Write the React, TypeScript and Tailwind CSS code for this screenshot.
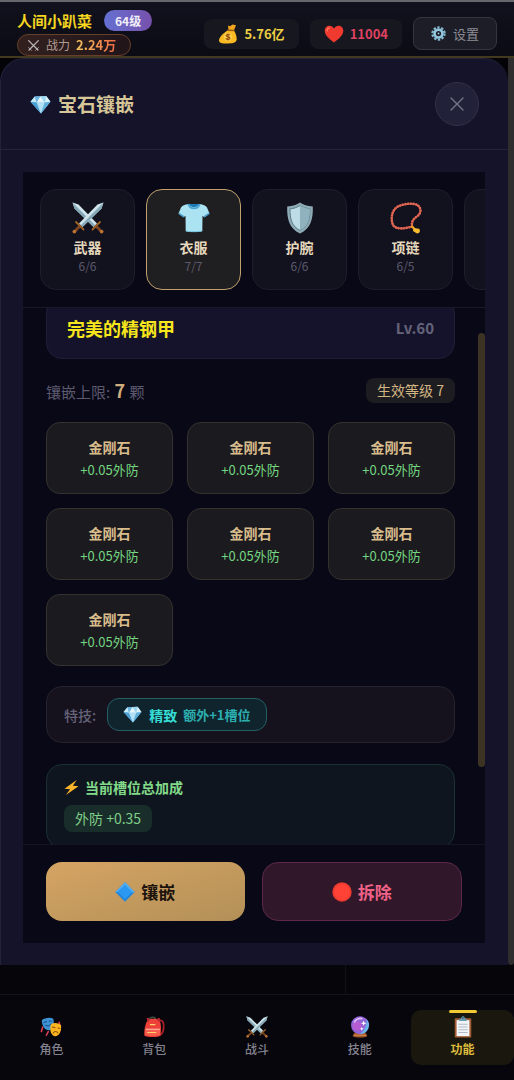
import { useLayoutEffect, useRef, useState } from "react";
import type { ReactNode } from "react";

type IconProps = { className?: string };

const GEMS = Array.from({ length: 7 }, (_, i) => ({ id: i, name: "金刚石", bonus: "+0.05外防" }));

function Swords({ className }: IconProps) {
  return (
    <svg viewBox="0 0 32 32" className={className} aria-hidden="true">
      {[false, true].map((flip) => (
        <g key={String(flip)} transform={flip ? "translate(32 0) scale(-1 1)" : undefined}>
          <path d="M.5.5l6 2L25 21.500 21.500 25 2.500 6.500z" fill="#cfe5eb" />
          <path d="M.5.5l22.700 22.700L21.500 25 2.500 6.500z" fill="#86a9b8" />
          <path d="M20.500 27.500l7.500-7.500" stroke="#a06428" strokeWidth="1.800" strokeLinecap="round" />
          <path d="M24.500 24.500l5 5" stroke="#7d4520" strokeWidth="2.800" />
          <circle cx="29.600" cy="29.600" r="1.900" fill="#b87330" />
        </g>
      ))}
    </svg>
  );
}

function CrossedBlades({ className }: IconProps) {
  return (
    <svg viewBox="0 0 16 16" className={className} aria-hidden="true" fill="none" stroke="#b9b4b4" strokeLinecap="round">
      <path d="M2 2l11.500 11.500M14 2L2.500 13.500" strokeWidth="1.600" />
      <path d="M10.500 14l3.500-3.500M5.500 14L2 10.500" strokeWidth="1" />
    </svg>
  );
}

function MoneyBag({ className }: IconProps) {
  return (
    <svg viewBox="0 0 20 20" className={className} aria-hidden="true">
      <path d="M10 1.500l2 .8L14.500.5l3.500.8-2 5-5.500-.3z" fill="#f2a61d" />
      <path d="M10.300 6c-3 1.800-9 6.500-9.300 10C.8 19 4 19.500 9 19.500s9.500-.3 9.700-4.200C18.800 11.500 17 8 15.500 6z" fill="#fbb924" />
      <path d="M10 6.200l6 .2" stroke="#9b5b12" strokeWidth="1.500" strokeLinecap="round" />
      <circle cx="10" cy="13" r="4.200" fill="#f9d04a" />
      <path d="M12 11.200c-.6-1-3.800-1.100-3.900.4 0 1.700 3.900.9 3.900 2.600-.1 1.600-3.400 1.500-4.200.2M10 9.500v7" stroke="#96490f" strokeWidth="1.100" fill="none" />
    </svg>
  );
}

function Heart({ className }: IconProps) {
  return (
    <svg viewBox="0 0 20 18" className={className} aria-hidden="true">
      <path d="M10 17.500C6 14.500.7 10.500.7 5.800.7 2.700 2.900.7 5.500.7c2 0 3.500 1 4.500 2.900C11 1.700 12.500.7 14.500.7c2.600 0 4.800 2 4.800 5.100 0 4.700-5.300 8.700-9.300 11.700z" fill="#f0392f" />
      <path d="M3 6c0-2 1-3 2.500-3" stroke="#ff8066" strokeWidth="1.200" fill="none" strokeLinecap="round" />
    </svg>
  );
}

function Gear({ className }: IconProps) {
  return (
    <svg viewBox="0 0 16 16" className={className} aria-hidden="true">
      <circle cx="8" cy="8" r="6.500" fill="none" stroke="#85b9d0" strokeWidth="2.400" strokeDasharray="2.500 1.580" />
      <circle cx="8" cy="8" r="4.200" fill="none" stroke="#93c6dc" strokeWidth="2.800" />
      <circle cx="8" cy="8" r="1" fill="#93c6dc" />
    </svg>
  );
}

function Diamond({ className }: IconProps) {
  return (
    <svg viewBox="0 0 22 20" className={className} aria-hidden="true">
      <path d="M5 1.500L17 1l4.500 6L11.500 19.500.5 7z" fill="#8ccbea" />
      <path d="M5 1.500L.5 7 7 8z" fill="#c4e9f7" />
      <path d="M5 1.500L11 1.200 7 8z" fill="#6cb4dd" />
      <path d="M11 1.200L15.500 8H7z" fill="#e3f6fc" />
      <path d="M11 1.200L17 1l-1.500 7z" fill="#9dd6ef" />
      <path d="M17 1l4.500 6-6 1z" fill="#d9f2fb" />
      <path d="M.5 7L7 8l4.500 11.500z" fill="#4b9fd3" />
      <path d="M7 8h8.500l-4 11.500z" fill="#b2e0f4" />
      <path d="M15.500 8l6-1-10 12.500z" fill="#5fb0dd" />
    </svg>
  );
}

function Shirt({ className }: IconProps) {
  return (
    <svg viewBox="0 0 32 32" className={className} aria-hidden="true">
      <path d="M10.500 2C7 2.500 4 3.500 3 5.500L.5 11.500l5.200 3.700 1.800-1.500.2 15.300c2 1.300 14.600 1.300 16.600 0l.2-15.300 1.800 1.500 5.200-3.700L29 5.500C28 3.500 25 2.500 21.500 2z" fill="#abe3f3" />
      <path d="M11 2c1 4.200 9 4.200 10 0z" fill="#1f7cb5" />
      <path d="M10.300 2c1.200 5.800 10.200 5.800 11.400 0" fill="none" stroke="#4ba5d4" strokeWidth="1.600" />
      <path d="M.8 11.300l5.200 3.600M31.200 11.300L26 14.900" fill="none" stroke="#4a9fce" strokeWidth="1.500" />
      <path d="M7.700 28.700c2 1.300 14.600 1.300 16.600 0" fill="none" stroke="#74c4e0" strokeWidth="1" />
    </svg>
  );
}

function Shield({ className }: IconProps) {
  return (
    <svg viewBox="0 0 32 32" className={className} aria-hidden="true">
      <path d="M16 .5c3 2.200 7.500 3.600 12.800 3.900C29.300 17 26.500 26.500 16 31.500 5.500 26.500 2.700 17 3.200 4.400 8.500 4.100 13 2.700 16 .5z" fill="#8fabb6" />
      <path d="M16 3.500c3 1.900 6 3 10 3.300C26 17 24.500 24 16 28.500 7.500 24 6 17 6 6.800c4-.3 7-1.400 10-3.300z" fill="#bddce5" stroke="#5b7a87" strokeWidth="1" />
      <path d="M16 3.500c3 1.900 6 3 10 3.300C26 17 24.500 24 16 28.500z" fill="#8fb2be" />
    </svg>
  );
}

function Beads({ className }: IconProps) {
  const loop = "M22 24.500C16 26.500 6 28 3 23 .5 17 1.500 8 8 4.500 14 1.500 24 .5 28 3.500c4 3.500 3 8-1 11-4 2.500-5.500 5-5 10";
  return (
    <svg viewBox="0 0 32 32" className={className} aria-hidden="true" fill="none">
      <path d={loop} stroke="#93332b" strokeWidth="2" />
      <path d={loop} stroke="#e06a55" strokeWidth="2.600" strokeLinecap="round" strokeDasharray="0.1 2.600" />
      <path d="M22 24.500l2.500 2.500" stroke="#f0a91f" strokeWidth="2.200" strokeLinecap="round" />
      <path d="M23.500 26l5.500.8c1.800 1.700.8 4.700-2 4.700l-4-2.500z" fill="#f8bd2f" />
    </svg>
  );
}

function Bolt({ className }: IconProps) {
  return (
    <svg viewBox="0 0 16 16" className={className} aria-hidden="true">
      <path d="M13.500 0L.5 9.300l6 .6L2 16 15.500 6.600l-6-.6z" fill="#fbb52b" />
    </svg>
  );
}

function BlueDiamond({ className }: IconProps) {
  return (
    <svg viewBox="0 0 20 20" className={className} aria-hidden="true">
      <path d="M10 .3l9.700 9.700L10 19.700.3 10z" fill="#2186dd" />
      <path d="M10 .3l9.700 9.700-2.200.8L10 3.300 2.500 10 .3 10z" fill="#54aef2" />
      <path d="M10 3l7 7-7 7-7-7z" fill="#2b98f2" />
    </svg>
  );
}

function RedCircle({ className }: IconProps) {
  return (
    <svg viewBox="0 0 20 20" className={className} aria-hidden="true">
      <circle cx="10" cy="10" r="9.700" fill="#ee3930" />
      <circle cx="10" cy="10" r="8" fill="#ff4136" />
    </svg>
  );
}

function Masks({ className }: IconProps) {
  return (
    <svg viewBox="0 0 24 24" className={className} aria-hidden="true">
      <path d="M3 12L1.500 17M9 17l-2 4M21 7l1 8" stroke="#d93c55" strokeWidth="1.800" strokeLinecap="round" />
      <path d="M2 4.500c3-2.500 9-3.500 12.500-1.500 1 5 .5 11-4 12.500C5 16 2 10 2 4.500z" fill="#3d93d6" />
      <path d="M4.500 7l2.500-1M10 5.500l2.500.2M6 10c2 1.500 4.500 1 6-1.200" stroke="#174e83" strokeWidth="1.100" fill="none" strokeLinecap="round" />
      <path d="M12 9c3-2 8-1.500 11 1 .5 5.500-1.500 11.500-6 12-5 .3-7-7-5-13z" fill="#fcb521" />
      <path d="M13.500 12l3 .8M19.500 13.200l2.300.3M14.500 18.500c1-2 4-2 5 0" stroke="#87500f" strokeWidth="1.100" fill="none" strokeLinecap="round" />
    </svg>
  );
}

function Backpack({ className }: IconProps) {
  return (
    <svg viewBox="0 0 24 24" className={className} aria-hidden="true">
      <path d="M17 5c5-1 6 3 5.500 8-.3 4-1.500 7-4.500 8" fill="none" stroke="#a91f2a" strokeWidth="2" />
      <path d="M7 4c0-3 6-3.500 7-.5" stroke="#364a3c" strokeWidth="1.700" fill="none" />
      <path d="M5 5c2-2.500 11-2.500 13 0 2 3 2 12 1 16.500-2 2-15 2-17.500 0C1 16 2.500 8 5 5z" fill="#ec4038" />
      <path d="M4 2.500c2-1.500 3 0 3 2.500l-2 2zM16 2.500c2.500-1.500 3.500 1 2.500 4L15.500 5z" fill="#bd2634" />
      <path d="M2.500 14h16v6.500c-3 1.500-13 1.500-16 0z" fill="#f65d4d" />
      <path d="M3 14.500h15.500" stroke="#ffb0a0" strokeWidth="1.300" />
      <path d="M8 9.500h5M5 18h9" stroke="#ffd36e" strokeWidth="1.300" strokeLinecap="round" />
    </svg>
  );
}

function CrystalBall({ className }: IconProps) {
  return (
    <svg viewBox="0 0 24 24" className={className} aria-hidden="true">
      <path d="M6 18h12l2 4c-3 2-13 2-16 0z" fill="#a4572b" />
      <path d="M5 21h14" stroke="#d08748" strokeWidth="1.200" />
      <circle cx="12" cy="10" r="9.800" fill="#9264d8" />
      <path d="M12 19.800a9.800 9.800 0 0 0 7-16.500c1 7-2 12-7 16.500z" fill="#69b5e7" />
      <circle cx="9" cy="11" r="5" fill="#c358d2" opacity=".75" />
      <path d="M6 6.500C8 3 12 2 14 3" stroke="#e2c2fa" strokeWidth="1.800" fill="none" strokeLinecap="round" />
      <path d="M16 5l.8 2.200L19 8l-2.200.8L16 11l-.8-2.200L13 8l2.200-.8zM14 12l.6 1.400 1.400.6-1.400.6L14 16l-.6-1.400L12 14l1.400-.6z" fill="#fff" />
    </svg>
  );
}

function Clipboard({ className }: IconProps) {
  return (
    <svg viewBox="0 0 24 24" className={className} aria-hidden="true">
      <rect x="3" y="2.500" width="18" height="21" rx="1" fill="#a25c33" />
      <path d="M5 4.500h14v17.500H5z" fill="#f2f5f8" />
      <path d="M7 9h10M7 12h10M7 15h10M7 18h10" stroke="#aab7c3" strokeWidth="1" />
      <path d="M8 5.500V3h2c0-3.500 4-3.500 4 0h2v2.500z" fill="#659bb5" />
      <circle cx="12" cy="2.200" r=".8" fill="#243c48" />
    </svg>
  );
}

const SLOTS = [
  { name: "武器", count: "6/6", Icon: Swords },
  { name: "衣服", count: "7/7", Icon: Shirt },
  { name: "护腕", count: "6/6", Icon: Shield },
  { name: "项链", count: "6/5", Icon: Beads },
  { name: "", count: "", Icon: null }
];

const NAV = [
  { label: "角色", Icon: Masks },
  { label: "背包", Icon: Backpack },
  { label: "战斗", Icon: Swords },
  { label: "技能", Icon: CrystalBall },
  { label: "功能", Icon: Clipboard }
];

function Resource({ icon, children, color }: { icon: ReactNode; children: ReactNode; color: string }) {
  return (
    <div className="flex h-[30px] items-center gap-[6px] rounded-lg bg-[#17171f] px-[14px]">
      {icon}
      <span className={`text-[13px] leading-5 font-bold ${color}`}>{children}</span>
    </div>
  );
}

function TopBar() {
  return (
    <header className="flex h-[58px] shrink-0 items-start justify-between border-t-2 border-b-2 border-t-[#66676d] border-b-[#43391f] bg-linear-to-b from-[#12121f] to-[#0b0b13] px-[17px]">
      <div className="h-[54px] overflow-hidden pt-2">
        <div className="flex items-center gap-3">
          <span className="text-[15px] leading-[21px] font-bold text-[#f6d51f]">人间小趴菜</span>
          <span className="rounded-full bg-linear-to-r from-[#6370d2] to-[#7650ac] px-[11px] text-[12px] leading-[21px] font-bold text-[#f1effa]">
            64级
          </span>
        </div>
        <div className="mt-[3px] flex h-[22px] w-[114px] items-center rounded-full border border-[#66402b] bg-linear-to-r from-[#32201e] to-[#21151a] px-[9px]">
          <CrossedBlades className="mr-[6px] size-[13px]" />
          <span className="mr-[6px] text-[12px] leading-5 text-[#b19b91]">战力</span>
          <span className="bg-linear-to-r from-[#f1c461] to-[#ee6945] bg-clip-text text-[13px] leading-5 font-bold text-transparent">
            2.24万
          </span>
        </div>
      </div>
      <div className="mt-[15px] flex items-center gap-[11px]">
        <Resource icon={<MoneyBag className="size-5" />} color="text-[#ebd044]">
          5.76亿
        </Resource>
        <Resource icon={<Heart className="h-[18px] w-5" />} color="text-[#df4261]">
          11004
        </Resource>
        <button className="flex h-[33px] items-center gap-[7px] rounded-lg border border-[#34353f] bg-[#1c1d27] px-[17px] text-[13px] text-[#8c8c94]">
          <Gear className="size-[15px]" />
          设置
        </button>
      </div>
    </header>
  );
}

function SlotTabs({ active, onSelect }: { active: number; onSelect: (i: number) => void }) {
  return (
    <div className="flex shrink-0 gap-[11px] overflow-hidden border-b border-[#1a1926] py-[17px] pl-[17px]">
      {SLOTS.map(({ name, count, Icon }, i) => (
        <button
          key={i}
          aria-label={name || "更多"}
          onClick={() => onSelect(i)}
          className={`flex h-[101px] w-[95px] shrink-0 flex-col items-center rounded-2xl border pt-3 ${
            i === active ? "border-[#c0a06c] bg-[#1f1e21]" : "border-[#1e1d29] bg-[#12111e]"
          }`}
        >
          {Icon && <Icon className="size-8" />}
          <span className="mt-[3px] text-[14px] leading-5 font-bold text-[#e5d8bd]">{name}</span>
          <span className="text-[12px] leading-[18px] text-[#5d5a6d]">{count}</span>
        </button>
      ))}
    </div>
  );
}

function GemCard({ name, bonus }: { name: string; bonus: string }) {
  return (
    <button className="flex h-[72px] flex-col items-center justify-center gap-[3px] rounded-[14px] border border-[#35312f] bg-[#1b1a1e]">
      <span className="text-[14px] leading-5 font-bold text-[#d9bd8c]">{name}</span>
      <span className="text-[13px] leading-5 text-[#73d681]">{bonus}</span>
    </button>
  );
}

function EquipmentDetail() {
  const scroller = useRef<HTMLDivElement>(null);

  // keep the item name in view, its card tucked under the tabs
  useLayoutEffect(() => {
    if (scroller.current) scroller.current.scrollTop = 31;
  }, []);

  return (
    <div className="flex min-h-0 flex-1">
      <div ref={scroller} className="min-w-0 flex-1 overflow-y-auto px-[23px] pt-[20px] pb-24 [scrollbar-width:none]">
        <div className="flex h-[62px] items-center justify-between rounded-2xl border border-[#1f1e37] bg-[#14132b] px-5">
          <h2 className="text-[18px] leading-6 font-bold text-[#f6e51c]">完美的精钢甲</h2>
          <span className="text-[15px] leading-6 font-bold text-[#656379]">Lv.60</span>
        </div>

        <div className="mt-[19px] flex h-[25px] items-center justify-between">
          <p className="text-[15px] leading-6 text-[#5c596f]">
            镶嵌上限: <b className="mx-px text-[18px] text-[#cfae7b]">7</b> 颗
          </p>
          <span className="rounded-lg bg-[#1d1c21] px-[11px] text-[14px] leading-[25px] text-[#d2b582]">生效等级 7</span>
        </div>

        <div className="mt-[19px] grid grid-cols-3 gap-[14px]">
          {GEMS.map((g) => (
            <GemCard key={g.id} name={g.name} bonus={g.bonus} />
          ))}
        </div>

        <div className="mt-5 flex h-[57px] items-center rounded-2xl border border-[#26232c] bg-[#15121d] px-[17px]">
          <span className="mr-[11px] text-[14px] leading-5 font-medium text-[#66627a]">特技:</span>
          <span className="flex h-[33px] items-center rounded-xl border border-[#245e63] bg-[#10242e] px-[15px] text-[#2fcfc8]">
            <Diamond className="mr-[7px] h-[17px] w-[19px]" />
            <b className="mr-[6px] text-[14px] leading-5 text-[#36ddd5]">精致</b>
            <span className="text-[13px] leading-5 font-bold text-[#2cadae]">额外+1槽位</span>
          </span>
        </div>

        <div className="mt-[21px] h-[84px] rounded-2xl border border-[#1b3033] bg-[#0e151e] px-[17px] pt-3">
          <h3 className="flex items-center gap-[6px] text-[14px] leading-5 font-bold text-[#82d989]">
            <Bolt className="size-[15px]" />
            当前槽位总加成
          </h3>
          <span className="mt-2 inline-block rounded-lg bg-[#192d2a] px-[11px] text-[14px] leading-[27px] text-[#80cf89]">
            外防 +0.35
          </span>
        </div>
      </div>
      <div className="w-[7px] pt-[25px] pb-[77px]">
        <div className="h-full rounded-full bg-[#3c3324]" />
      </div>
    </div>
  );
}

function GemDialog() {
  const [slot, setSlot] = useState(1);

  return (
    <section className="flex min-w-0 flex-1 flex-col rounded-t-[24px] border-t border-l border-[#22223b] bg-[#14132a]">
      <div className="flex h-[91px] shrink-0 items-center justify-between border-b border-[#25243a] px-[29px]">
        <h1 className="flex items-center gap-[7px] text-[19px] leading-7 font-bold text-[#d7c698]">
          <Diamond className="h-[19px] w-[21px]" />
          宝石镶嵌
        </h1>
        <button
          aria-label="关闭"
          className="flex size-11 items-center justify-center rounded-full border border-[#303047] bg-[#21213a] text-[#77778a]"
        >
          <svg viewBox="0 0 14 14" className="size-[14px]" stroke="currentColor" strokeWidth="1.300" strokeLinecap="round">
            <path d="M1 1l12 12M13 1L1 13" />
          </svg>
        </button>
      </div>

      <div className="mt-[22px] mr-[23px] mb-[22px] ml-[22px] flex min-h-0 flex-1 flex-col bg-[#090816]">
        <SlotTabs active={slot} onSelect={setSlot} />
        <EquipmentDetail />
        <div className="flex shrink-0 gap-[17px] border-t border-[#151421] px-[23px] pt-[17px] pb-[22px]">
          <button className="flex h-[59px] flex-1 items-center justify-center gap-[6px] rounded-2xl bg-linear-to-br from-[#d5a463] to-[#b39058] text-[17px] font-bold text-[#1b130c]">
            <BlueDiamond className="size-5" />
            镶嵌
          </button>
          <button className="flex h-[59px] flex-1 items-center justify-center gap-[6px] rounded-2xl border border-[#5c2748] bg-[#30182a] text-[17px] font-bold text-[#ef6286]">
            <RedCircle className="size-5" />
            拆除
          </button>
        </div>
      </div>
    </section>
  );
}

function BottomNav() {
  return (
    <nav className="grid h-[86px] shrink-0 grid-cols-5 border-t border-[#131319] bg-[#06060c] py-[15px]">
      {NAV.map(({ label, Icon }) => {
        const active = label === "功能";
        return (
          <button
            key={label}
            className={`relative flex flex-col items-center rounded-[10px] pt-[6px] text-[12px] leading-[22px] ${
              active ? "bg-[#1a180e] font-bold text-[#dfbd3e]" : "font-medium text-[#85838f]"
            }`}
          >
            {active && <span className="absolute top-0 h-[3px] w-7 rounded-full bg-[#f2ca33]" />}
            <Icon className="size-[22px]" />
            {label}
          </button>
        );
      })}
    </nav>
  );
}

export default function App() {
  return (
    <div className="flex h-screen flex-col overflow-hidden bg-[#030308] font-['Noto_Sans_CJK_SC',sans-serif]">
      <TopBar />
      <main className="flex min-h-0 flex-1">
        <GemDialog />
        <div className="w-[6px] rounded-b-full bg-[#302d2e]" />
      </main>
      <div className="flex h-[29px] shrink-0 bg-[#05050a]">
        <div className="w-[346px] border-r border-[#111117]" />
      </div>
      <BottomNav />
    </div>
  );
}
